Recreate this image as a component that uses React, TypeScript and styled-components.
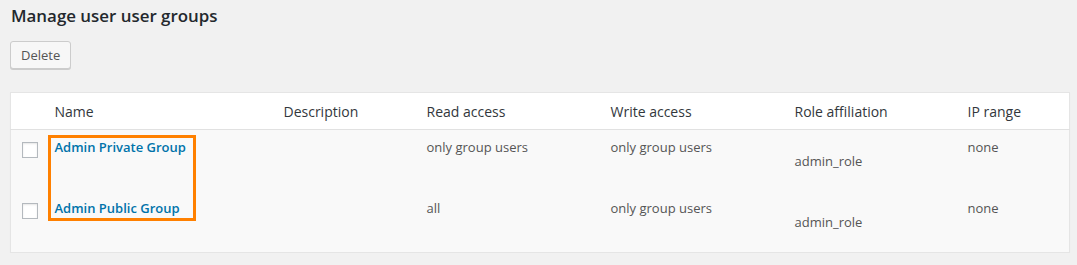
import React from "react";
import styled, { createGlobalStyle } from "styled-components";

const GlobalStyle = createGlobalStyle`
  html, body {
    margin: 0;
    padding: 0;
    background: #f1f1f1;
    font-family: "Open Sans", "Liberation Sans", sans-serif;
    font-size: 13px;
    color: #444;
  }
  * {
    box-sizing: border-box;
  }
`;

const Wrap = styled.div`
  padding: 0 7px 0 10px;
`;

const Title = styled.h2`
  margin: 0;
  padding: 4px 0 0 1px;
  font-size: 16.9px;
  font-weight: 600;
  line-height: 23px;
  color: #23282d;
`;

const Button = styled.button`
  display: block;
  margin-top: 14px;
  height: 28px;
  padding: 0 10px 1px;
  font-family: inherit;
  font-size: 13px;
  line-height: 26px;
  color: #555;
  background: #f7f7f7;
  border: 1px solid #ccc;
  border-radius: 3px;
  box-shadow: 0 1px 0 #ccc;
  cursor: pointer;
`;

const TableBox = styled.div`
  position: relative;
  margin-top: 23px;
`;

const Table = styled.table`
  width: 100%;
  border-collapse: collapse;
  border: 1px solid #e5e5e5;
  box-shadow: 0 1px 1px rgba(0, 0, 0, 0.04);
  table-layout: fixed;
`;

const HeadRow = styled.tr`
  background: #fff;
  border-bottom: 1px solid #e1e1e1;
  height: 37px;
`;

const Th = styled.th<{ $w?: number }>`
  width: ${(p) => (p.$w ? `${p.$w}px` : "auto")};
  padding: 0 10px;
  text-align: left;
  font-weight: 400;
  font-size: 14px;
  line-height: 19px;
  color: #32373c;
`;

const Row = styled.tr<{ $last?: boolean }>`
  background: #f9f9f9;
  height: ${(p) => (p.$last ? "62px" : "61px")};
`;

const Td = styled.td<{ $drop?: boolean }>`
  vertical-align: top;
  padding: ${(p) => (p.$drop ? "22px" : "8px")} 10px 0;
  font-size: 13px;
  line-height: 19px;
  color: #555;
`;

const CheckCell = styled.td`
  vertical-align: top;
  padding: 12px 0 0 11px;
`;

const Check = styled.input.attrs({ type: "checkbox" })`
  appearance: none;
  display: block;
  margin: 0;
  width: 16px;
  height: 16px;
  border: 1px solid #b4b9be;
  background: #fff;
  box-shadow: inset 0 1px 2px rgba(0, 0, 0, 0.1);
`;

const GroupLink = styled.a`
  font-size: 13px;
  font-weight: 600;
  color: #0073aa;
  text-decoration: none;
`;

const Highlight = styled.div`
  position: absolute;
  left: 38px;
  top: 43px;
  width: 148px;
  height: 86px;
  border: 3px solid #ff8000;
  pointer-events: none;
`;

const groups = [
  { name: "Admin Private Group", read: "only group users", write: "only group users", role: "admin_role", ip: "none" },
  { name: "Admin Public Group", read: "all", write: "only group users", role: "admin_role", ip: "none" },
];

export default function App() {
  return (
    <Wrap>
      <GlobalStyle />
      <Title>Manage user user groups</Title>
      <Button>Delete</Button>
      <TableBox>
        <Table>
          <thead>
            <HeadRow>
              <Th $w={34} />
              <Th $w={229}>Name</Th>
              <Th $w={143}>Description</Th>
              <Th $w={184}>Read access</Th>
              <Th $w={184}>Write access</Th>
              <Th $w={173}>Role affiliation</Th>
              <Th>IP range</Th>
            </HeadRow>
          </thead>
          <tbody>
            {groups.map((g, i) => (
              <Row key={g.name} $last={i === groups.length - 1}>
                <CheckCell>
                  <Check />
                </CheckCell>
                <Td>
                  <GroupLink href="#">{g.name}</GroupLink>
                </Td>
                <Td />
                <Td>{g.read}</Td>
                <Td>{g.write}</Td>
                <Td $drop>{g.role}</Td>
                <Td>{g.ip}</Td>
              </Row>
            ))}
          </tbody>
        </Table>
        <Highlight />
      </TableBox>
    </Wrap>
  );
}
